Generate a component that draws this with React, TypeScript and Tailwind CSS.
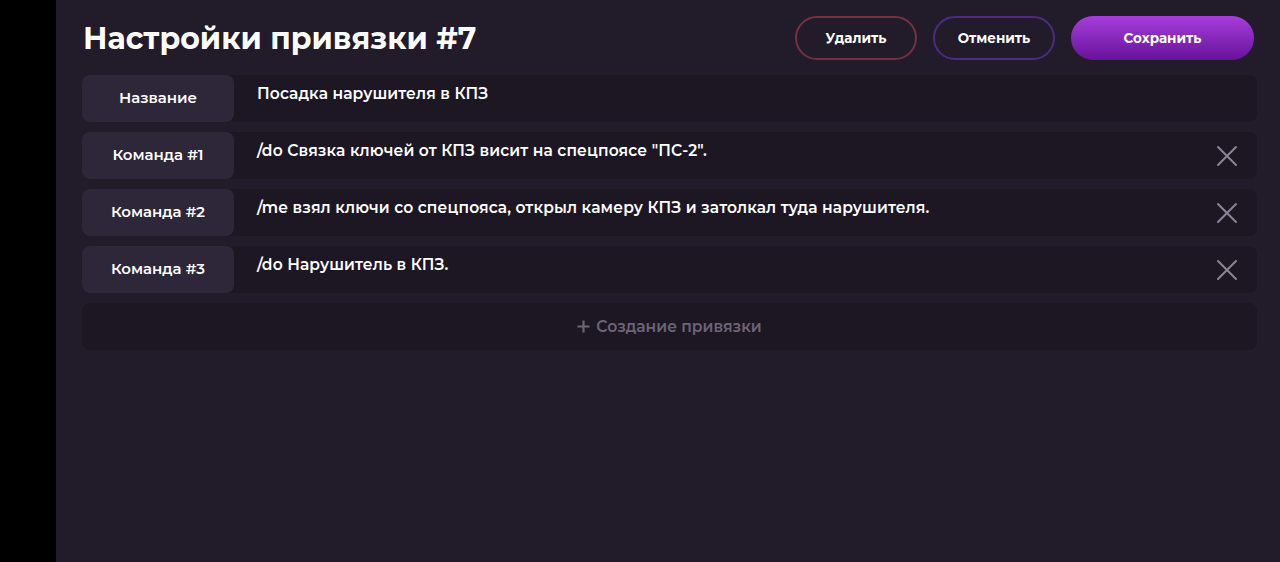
import React from "react";

const rows = [
  { label: "Название", value: "Посадка нарушителя в КПЗ", del: false },
  { label: "Команда #1", value: '/do Связка ключей от КПЗ висит на спецпоясе "ПС-2".', del: true },
  { label: "Команда #2", value: "/me взял ключи со спецпояса, открыл камеру КПЗ и затолкал туда нарушителя.", del: true },
  { label: "Команда #3", value: "/do Нарушитель в КПЗ.", del: true },
];

function XIcon() {
  return (
    <svg width="22" height="22" viewBox="0 0 22 22" fill="none">
      <path d="M2 2 L20 20 M20 2 L2 20" stroke="#8c8496" strokeWidth="2" strokeLinecap="round" />
    </svg>
  );
}

function PlusIcon() {
  return (
    <svg width="13" height="13" viewBox="0 0 13 13" fill="none">
      <path d="M6.5 0.5 V12.5 M0.5 6.5 H12.5" stroke="#6d6477" strokeWidth="2.2" />
    </svg>
  );
}

export default function App() {
  return (
    <div className="flex h-[562px] w-[1280px] bg-black" style={{ fontFamily: '"Montserrat", "Noto Sans", sans-serif' }}>
      <div className="w-[56px] shrink-0 bg-black" />
      <div className="flex-1 bg-[#221c2a] pl-[26px] pr-[23px]">
        <div className="flex h-[75px] items-center justify-between pt-[1px]">
          <h1 className="mt-[1px] pl-[1px] text-[30px] font-bold text-white">
            Настройки привязки #7
          </h1>
          <div className="flex gap-[16px] pr-[3px]">
            <button className="h-[44px] w-[122px] rounded-full border-2 border-[#773040] text-[13.5px] font-bold text-white">Удалить</button>
            <button className="h-[44px] w-[122px] rounded-full border-2 border-[#4d2a84] text-[13.5px] font-bold text-white">Отменить</button>
            <button className="h-[44px] w-[183px] rounded-full bg-gradient-to-b from-[#a73ddb] to-[#67119c] text-[13.5px] font-bold text-white">Сохранить</button>
          </div>
        </div>
        <div className="flex flex-col gap-[10px]">
          {rows.map((r) => (
            <div key={r.label} className="flex h-[47px] rounded-lg bg-[#1d1724]">
              <div className="flex w-[152px] shrink-0 items-center justify-center rounded-lg bg-[#2e2639] text-[15px] font-semibold text-white">
                {r.label}
              </div>
              <div className="flex-1 pl-[23px] pt-[7px] text-[15.5px] font-semibold tracking-[0.12px] text-white">{r.value}</div>
              {r.del && (
                <div className="flex items-center pr-[19px]">
                  <XIcon />
                </div>
              )}
            </div>
          ))}
          <div className="flex h-[47px] items-center justify-center gap-[6px] rounded-lg bg-[#1d1724] text-[15.5px] font-semibold text-[#6d6477]">
            <PlusIcon />
            <span>Создание привязки</span>
          </div>
        </div>
      </div>
    </div>
  );
}
